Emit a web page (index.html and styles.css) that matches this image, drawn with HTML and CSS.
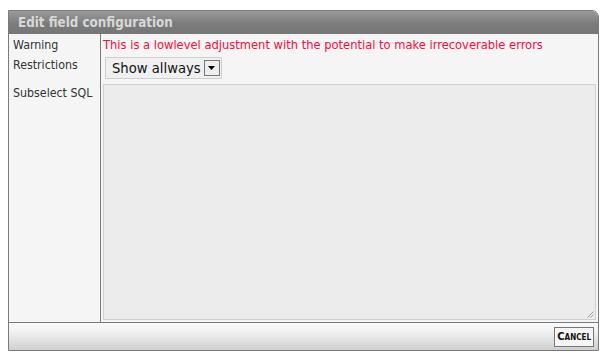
FILE: index.html
```html
<!DOCTYPE html>
<html>
<head>
<meta charset="utf-8">
<link rel="stylesheet" href="styles.css">
</head>
<body>
<div class="dialog">
  <div class="titlebar">Edit field configuration</div>
  <div class="content">
    <div class="labels">
      <div class="lbl lbl-warning">Warning</div>
      <div class="lbl lbl-restr">Restrictions</div>
      <div class="lbl lbl-sql">Subselect SQL</div>
    </div>
    <div class="fields">
      <div class="warning">This is a lowlevel adjustment with the potential to make irrecoverable errors</div>
      <div class="select-row">
        <div class="select">
          <span class="select-text">Show allways</span>
          <span class="select-btn"><svg width="7" height="4" viewBox="0 0 7 4"><path d="M0 0H7L3.5 4Z" fill="#000"/></svg></span>
        </div>
      </div>
      <div class="textarea">
        <svg class="grip" width="8" height="8" viewBox="0 0 8 8"><path d="M7.5 1.5L1.5 7.5M7.5 4.5L4.5 7.5" stroke="#999" stroke-width="1"/></svg>
      </div>
    </div>
  </div>
  <div class="footer">
    <button class="cancel">Cancel</button>
  </div>
</div>
</body>
</html>
```
FILE: styles.css
```css
html, body { margin: 0; padding: 0; background: #fff; }
body { padding: 10px 15px 0 8px; font-family: "DejaVu Sans Condensed", "DejaVu Sans", sans-serif; }
.dialog {
  width: 589px;
  border: 1px solid #7a7a7a;
  border-top-right-radius: 7px;
  background: #f5f5f5;
  overflow: hidden;
}
.titlebar {
  height: 23px;
  line-height: 23px;
  padding-left: 9px;
  background: linear-gradient(#9a9a9a, #7c7c7c 55%, #767676);
  color: #d8d8d8;
  font-weight: bold;
  font-size: 13.3px;
}
.content { display: flex; height: 288px; }
.labels {
  width: 92px;
  border-right: 1px solid #7a7a7a;
  padding: 1px 0 0 4px;
  box-sizing: border-box;
  font-size: 12.3px;
  color: #333;
  white-space: nowrap;
}
.lbl { height: 20px; line-height: 20px; }
.lbl-restr { height: 28px; }
.fields { flex: 1; padding: 1px 2px 2px 2px; display: flex; flex-direction: column; }
.warning { color: #ff0a3c; font-size: 12.8px; line-height: 20px; height: 20px; }
.select-row { padding: 2px 0 5px 2px; }
.select {
  display: inline-flex; align-items: center;
  border: 1px solid #cfcfcf; background: #f0f0f0;
  height: 20px; padding-left: 6px;
  font-family: "DejaVu Sans", sans-serif;
  font-size: 13.2px; color: #111;
}
.select-text { margin-right: 3px; }
.select-btn {
  width: 16px; height: 16px; box-sizing: border-box;
  border: 1px solid #777; background: #eee;
  display: flex; align-items: center; justify-content: center;
  margin-right: 1px;
}
.textarea {
  flex: 1; position: relative;
  border: 1px solid #cfcfcf; background: #ececec;
}
.grip { position: absolute; right: 1px; bottom: 1px; }
.footer {
  border-top: 1px solid #7a7a7a;
  height: 27px;
  background: linear-gradient(#fafafa, #f2f2f2 30%, #cfcfcf);
  display: flex; justify-content: flex-end; align-items: center;
  padding-right: 4px;
}
.cancel {
  font-family: "DejaVu Sans Condensed", sans-serif;
  font-variant: small-caps; font-weight: bold; font-size: 11px;
  color: #111; background: #f5f5f5;
  border: 1px solid #777; padding: 0 2px; height: 20px; margin: 0;
}
```
